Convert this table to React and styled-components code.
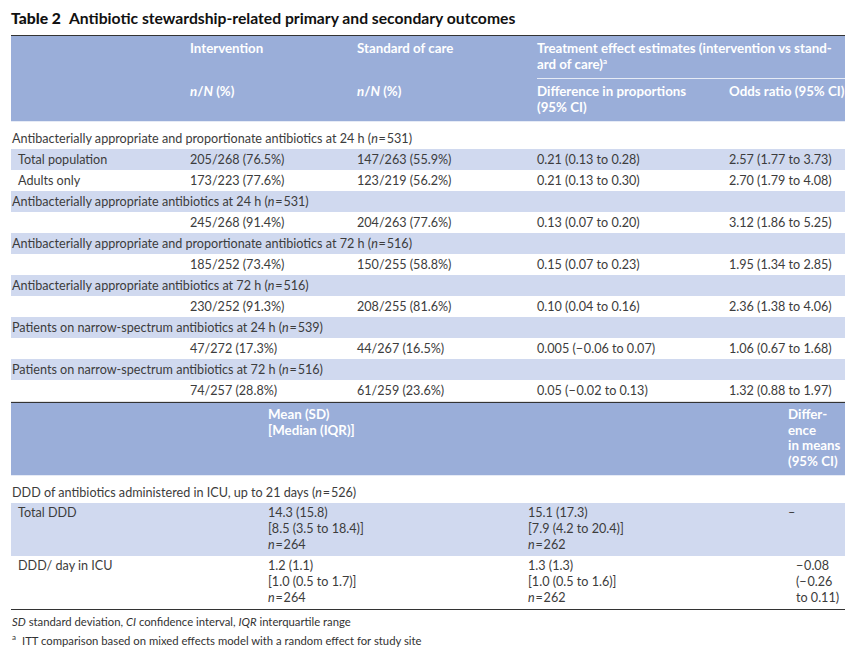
import React from 'react';
import styled, { createGlobalStyle } from 'styled-components';

const Global = createGlobalStyle`
  html, body { margin: 0; padding: 0; background: #fff; }
  body { font-family: Lato, "Liberation Sans", sans-serif; color: #3c3c3c; }
`;

const HEAD_BG = '#9aaed9';
const SHADE_BG = '#d0d9ef';
const COLS1 = '179px 167px 180px 192px 116px';
const COLS2 = '257px 260px 260px 57px';

const Page = styled.div`
  width: 834px;
  padding: 8px 0 0 11px;
`;

const Title = styled.h1`
  margin: 0;
  height: 27px;
  font-size: 15.7px;
  line-height: 20px;
  font-weight: 700;
  color: #111;
  b { margin-right: 8px; }
`;

const Head = styled.div`
  display: grid;
  grid-template-columns: ${p => p.$cols};
  grid-template-rows: ${p => p.$rows};
  background: ${HEAD_BG};
  border-top: 1.5px solid #333;
  border-bottom: 1px solid #e6ebf6;
  color: #fff;
  font-weight: 700;
  font-size: 13.3px;
  line-height: ${p => p.$lh || '16px'};
`;

const HCell = styled.div`
  grid-column: ${p => p.$col};
  grid-row: ${p => p.$row || 'auto'};
  padding: 4px ${p => p.$pr || 0}px 0 0;
  border-bottom: ${p => (p.$rule ? '1.5px solid #e6ebf6' : 'none')};
  sup { font-size: 8px; line-height: 0; }
`;

const Body = styled.div`
  padding-top: 6px;
  border-bottom: ${p => (p.$light ? '1px solid #e2e2e2' : '1.5px solid #333')};
  font-size: 12.6px;
  line-height: 16px;
`;

const Row = styled.div`
  display: grid;
  grid-template-columns: ${p => p.$cols};
  min-height: 21px;
  align-items: ${p => (p.$multi ? 'start' : 'center')};
  padding: ${p => (p.$multi ? '2px 0 3px' : '0')};
  background: ${p => (p.$shade ? SHADE_BG : 'transparent')};
`;

const GroupLabel = styled.div`
  grid-column: 1 / -1;
  padding-left: 1px;
`;

const Cell = styled.div`
  padding-left: ${p => p.$indent || 0}px;
  white-space: nowrap;
`;

const Foot = styled.div`
  padding-top: 2px;
  font-size: 11.3px;
  line-height: 19px;
  color: #333;
  padding-left: 1px;
  sup { font-size: 8px; line-height: 0; margin-right: 6px; }
`;

const N = () => <i>n</i>;
const eq = (v) => <>(<N />{'\u200A=\u200A'}{v})</>;

const groups = [
  {
    label: <>Antibacterially appropriate and proportionate antibiotics at 24 h {eq(531)}</>,
    rows: [
      ['Total population', '205/268 (76.5%)', '147/263 (55.9%)', '0.21 (0.13 to 0.28)', '2.57 (1.77 to 3.73)'],
      ['Adults only', '173/223 (77.6%)', '123/219 (56.2%)', '0.21 (0.13 to 0.30)', '2.70 (1.79 to 4.08)'],
    ],
  },
  {
    label: <>Antibacterially appropriate antibiotics at 24 h {eq(531)}</>,
    rows: [['', '245/268 (91.4%)', '204/263 (77.6%)', '0.13 (0.07 to 0.20)', '3.12 (1.86 to 5.25)']],
  },
  {
    label: <>Antibacterially appropriate and proportionate antibiotics at 72 h {eq(516)}</>,
    rows: [['', '185/252 (73.4%)', '150/255 (58.8%)', '0.15 (0.07 to 0.23)', '1.95 (1.34 to 2.85)']],
  },
  {
    label: <>Antibacterially appropriate antibiotics at 72 h {eq(516)}</>,
    rows: [['', '230/252 (91.3%)', '208/255 (81.6%)', '0.10 (0.04 to 0.16)', '2.36 (1.38 to 4.06)']],
  },
  {
    label: <>Patients on narrow-spectrum antibiotics at 24 h {eq(539)}</>,
    rows: [['', '47/272 (17.3%)', '44/267 (16.5%)', '0.005 (\u2212\u200A0.06 to 0.07)', '1.06 (0.67 to 1.68)']],
  },
  {
    label: <>Patients on narrow-spectrum antibiotics at 72 h {eq(516)}</>,
    rows: [['', '74/257 (28.8%)', '61/259 (23.6%)', '0.05 (\u2212\u200A0.02 to 0.13)', '1.32 (0.88 to 1.97)']],
  },
];

function App() {
  const bodyRows = [];
  groups.forEach((g, gi) => {
    bodyRows.push(
      <Row key={`g${gi}`} $cols={COLS1} $shade={gi !== 0}>
        <GroupLabel>{g.label}</GroupLabel>
      </Row>
    );
    g.rows.forEach((r, ri) => {
      const shade = gi === 0 && ri === 0;
      bodyRows.push(
        <Row key={`r${gi}-${ri}`} $cols={COLS1} $shade={shade}>
          <Cell $indent={7}>{r[0]}</Cell>
          <Cell>{r[1]}</Cell>
          <Cell>{r[2]}</Cell>
          <Cell>{r[3]}</Cell>
          <Cell>{r[4]}</Cell>
        </Row>
      );
    });
  });

  return (
    <Page>
      <Global />
      <Title><b>Table 2</b>Antibiotic stewardship-related primary and secondary outcomes</Title>

      <Head $cols={COLS1} $rows="43px 42px">
        <HCell $col="1" $row="1 / 3" />
        <HCell $col="2" $row="1">Intervention</HCell>
        <HCell $col="3" $row="1">Standard of care</HCell>
        <HCell $col="4 / 6" $row="1" $rule $pr={10}>
          Treatment effect estimates (intervention vs stand-<br />ard of care)<sup>a</sup>
        </HCell>
        <HCell $col="2" $row="2"><i>n</i>/<i>N</i> (%)</HCell>
        <HCell $col="3" $row="2"><i>n</i>/<i>N</i> (%)</HCell>
        <HCell $col="4" $row="2">Difference in proportions<br />(95% CI)</HCell>
        <HCell $col="5" $row="2">Odds ratio (95% CI)</HCell>
      </Head>
      <Body $light>{bodyRows}</Body>

      <Head $cols={COLS2} $rows="72px" $lh="15.5px">
        <HCell $col="1" />
        <HCell $col="2">Mean (SD)<br />[Median (IQR)]</HCell>
        <HCell $col="3" />
        <HCell $col="4">Differ-<br />ence<br />in means<br />(95% CI)</HCell>
      </Head>
      <Body>
        <Row $cols={COLS2}>
          <GroupLabel>DDD of antibiotics administered in ICU, up to 21 days {eq(526)}</GroupLabel>
        </Row>
        <Row $cols={COLS2} $shade $multi>
          <Cell $indent={7}>Total DDD</Cell>
          <Cell>14.3 (15.8)<br />[8.5 (3.5 to 18.4)]<br /><N />{'\u200A=\u200A'}264</Cell>
          <Cell>15.1 (17.3)<br />[7.9 (4.2 to 20.4)]<br /><N />{'\u200A=\u200A'}262</Cell>
          <Cell>–</Cell>
        </Row>
        <Row $cols={COLS2} $multi>
          <Cell $indent={7}>DDD/ day in ICU</Cell>
          <Cell>1.2 (1.1)<br />[1.0 (0.5 to 1.7)]<br /><N />{'\u200A=\u200A'}264</Cell>
          <Cell>1.3 (1.3)<br />[1.0 (0.5 to 1.6)]<br /><N />{'\u200A=\u200A'}262</Cell>
          <Cell $indent={8}>{'\u2212\u200A0.08'}<br />{'(\u2212\u200A0.26'}<br />to 0.11)</Cell>
        </Row>
      </Body>

      <Foot>
        <div><i>SD</i> standard deviation, <i>CI</i> confidence interval, <i>IQR</i> interquartile range</div>
        <div><sup>a</sup>ITT comparison based on mixed effects model with a random effect for study site</div>
      </Foot>
    </Page>
  );
}

export default App;
